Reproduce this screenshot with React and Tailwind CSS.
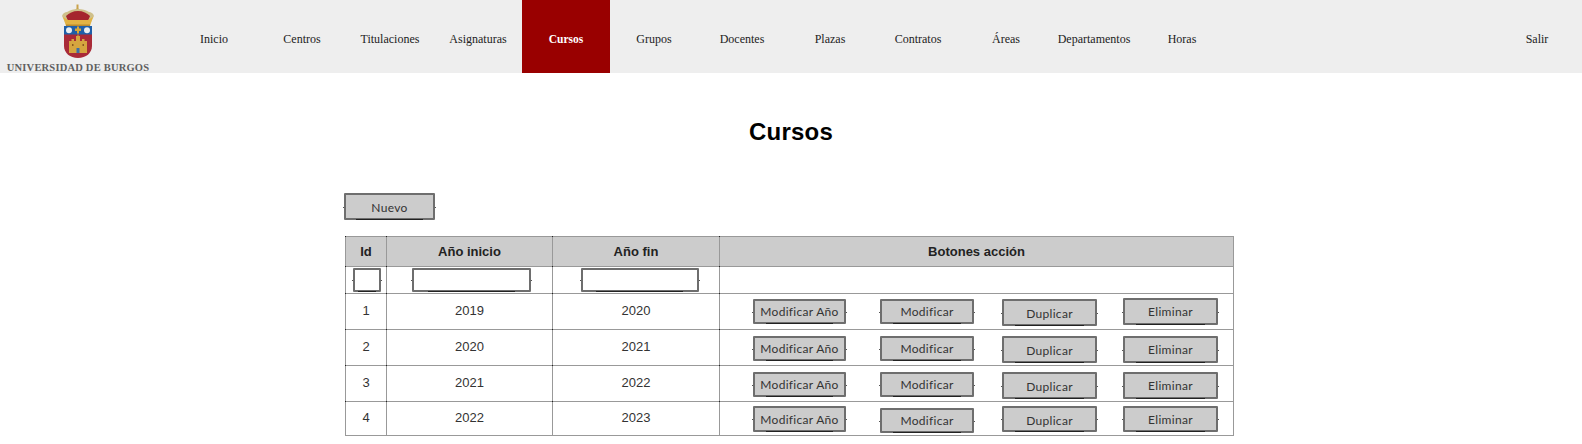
import React from "react";

const navItems = [
  "Inicio",
  "Centros",
  "Titulaciones",
  "Asignaturas",
  "Cursos",
  "Grupos",
  "Docentes",
  "Plazas",
  "Contratos",
  "Áreas",
  "Departamentos",
  "Horas",
];

// one class string per button: top offset and height change a bit from row to row
const rows = [
  { id: 1, start: 2019, end: 2020, top: "pt-[4px]", boxes: ["mt-[1px] h-[25px]", "mt-[1px] h-[25px]", "mt-[1px] h-[27px]", "h-[27px]"] },
  { id: 2, start: 2020, end: 2021, top: "pt-[6px]", boxes: ["h-[25px]", "h-[25px]", "h-[27px]", "h-[27px]"] },
  { id: 3, start: 2021, end: 2022, top: "pt-[6px]", boxes: ["h-[25px]", "h-[25px]", "h-[27px]", "h-[27px]"] },
  { id: 4, start: 2022, end: 2023, top: "pt-[4px]", boxes: ["h-[26px]", "mt-[2px] h-[25px]", "h-[26px]", "h-[26px]"] },
];

const cell =
  "relative border border-[#999999] p-0 before:absolute before:-left-px before:-top-px before:h-px before:w-px before:bg-[#222222]";

const Crest = () => (
  <svg width="34" height="54" viewBox="0 0 34 54" className="blur-[0.5px]">
    {/* crown */}
    <path d="M15.500 0.500h2v4l1.500 1.500-1.500 2h-2L14 6l1.500-1.500z" fill="#c9a24a" />
    <path d="M1 12c1-3 3-4 5-4 3-2 7-3 11-3s8 1 11 3c2 0 4 1 5 4l-3 6H4z" fill="#cfc08a" />
    <path d="M5 12c3-3 7-5 12-5s9 2 12 5l-2 5H7z" fill="#a5262e" />
    <path d="M2 13l5 3h20l5-3-3 9H5z" fill="#e2b344" />
    <path d="M5 20.500h24v2H5z" fill="#b98a2e" />
    {/* shield */}
    <path d="M3 22h28v20c0 7-6 12-14 12S3 49 3 42z" fill="#a92a38" />
    <path d="M3 22h28v8.500H3z" fill="#1f5fa8" />
    <circle cx="8" cy="26.200" r="3" fill="#e9eef2" />
    <circle cx="26" cy="26.200" r="3" fill="#e9eef2" />
    <path d="M16 22.500h2v2h2V27h-2v2.500h-2V27h-2v-2.500h2z" fill="#d9a83a" />
    {/* castle */}
    <path d="M8 37h2.500v-2H13v2h2v-5h1.500v-1.500h1V32H19v5h2v-2h2.500v2H26v12H8z" fill="#d6a53f" />
    <path d="M15.500 44h3v5h-3z" fill="#3a6ea8" />
    <path d="M11 40h1.500v2H11zM21.500 40H23v2h-1.500z" fill="#8a5a20" />
  </svg>
);

const Sketch = ({ className = "", children }) => (
  <div className={`relative flex items-center justify-center border-2 border-[#6e6e6e] rounded-[1px] ${className}`}>
    <span className="absolute -left-[3px] top-1/2 h-px w-px bg-[#555555]" />
    <span className="absolute -right-[3px] top-1/2 h-px w-px bg-[#555555]" />
    <span className="absolute -bottom-[2px] left-[12%] right-[12%] h-px bg-[#222222]" />
    {children}
  </div>
);

const ActionButton = ({ className, children }) => (
  <Sketch className={`bg-[#cccccc] text-[12px] tracking-[0.3px] text-[#333333] font-['Lato',sans-serif] ${className}`}>
    {children}
  </Sketch>
);

const App = () => {
  return (
    <div className="min-h-[444px] bg-white font-['Liberation_Sans',Arial,sans-serif]">
      {/* NAV */}
      <nav className="flex h-[73px] bg-[#eeeeee] font-['Liberation_Serif',serif] text-[12px] text-[#222222]">
        <div className="flex h-[73px] w-[170px] flex-col items-center overflow-hidden pt-[4px]">
          <div className="ml-[-14px] h-[54px]">
            <Crest />
          </div>
          <div className="ml-[-14px] mt-[4px] whitespace-nowrap text-[10.5px] font-bold leading-[12px] tracking-[0.2px] text-[#5f5f5f]">
            UNIVERSIDAD DE BURGOS
          </div>
        </div>
        {navItems.map((item) => (
          <a
            key={item}
            className={`flex w-[88px] items-center justify-center ${
              item === "Cursos" ? "bg-[#990000] pt-[6px] text-[11.500px] font-bold text-white" : "pt-[5px]"
            }`}
          >
            {item}
          </a>
        ))}
        <a className="ml-auto flex w-[90px] items-center justify-center pt-[5px]">Salir</a>
      </nav>

      {/* TITLE */}
      <h1 className="mt-[44px] text-center text-[24px] font-bold leading-[30px] tracking-[0.2px] text-black">Cursos</h1>

      <div className="ml-[345px] w-[888px]">
        <div className="mt-[46px] ml-[-1px]">
          <ActionButton className="h-[27px] w-[91px] pt-[2px]">Nuevo</ActionButton>
        </div>

        {/* TABLE */}
        <table className="mt-[16px] w-[888px] table-fixed border-collapse text-center text-[13px] text-[#333333]">
          <colgroup>
            <col className="w-[41px]" />
            <col className="w-[166px]" />
            <col className="w-[167px]" />
            <col className="w-[514px]" />
          </colgroup>
          <thead>
            <tr className="h-[30px] bg-[#cccccc] text-[13px] text-[#222222]">
              <th className={`${cell} font-bold`}>Id</th>
              <th className={`${cell} font-bold`}>Año inicio</th>
              <th className={`${cell} font-bold`}>Año fin</th>
              <th className={`${cell} font-bold`}>Botones acción</th>
            </tr>
          </thead>
          <tbody>
            <tr className="h-[27px]">
              <td className={cell}>
                <div className="flex justify-center pl-[2px]">
                  <Sketch className="h-[24px] w-[28px] bg-white" />
                </div>
              </td>
              <td className={cell}>
                <div className="flex justify-center pl-[4px]">
                  <Sketch className="h-[24px] w-[119px] bg-white" />
                </div>
              </td>
              <td className={cell}>
                <div className="flex justify-center pl-[7px]">
                  <Sketch className="h-[24px] w-[118px] bg-white" />
                </div>
              </td>
              <td className={cell} />
            </tr>
            {rows.map((row) => (
              <tr key={row.id} className={row.id === 4 ? "h-[34px]" : "h-[36px]"}>
                <td className={`${cell} pb-[2px]`}>{row.id}</td>
                <td className={`${cell} pb-[2px]`}>{row.start}</td>
                <td className={`${cell} pb-[2px]`}>{row.end}</td>
                <td className={`${cell} align-top`}>
                  <div className={`flex items-start pl-[33px] ${row.top}`}>
                    <ActionButton className={`w-[93px] pt-[1px] ${row.boxes[0]}`}>Modificar Año</ActionButton>
                    <ActionButton className={`ml-[34px] w-[94px] pt-[1px] ${row.boxes[1]}`}>Modificar</ActionButton>
                    <ActionButton className={`ml-[28px] w-[95px] pt-[3px] ${row.boxes[2]}`}>Duplicar</ActionButton>
                    <ActionButton className={`ml-[26px] w-[95px] pt-[1px] ${row.boxes[3]}`}>Eliminar</ActionButton>
                  </div>
                </td>
              </tr>
            ))}
          </tbody>
        </table>
      </div>
    </div>
  );
};

export default App;
